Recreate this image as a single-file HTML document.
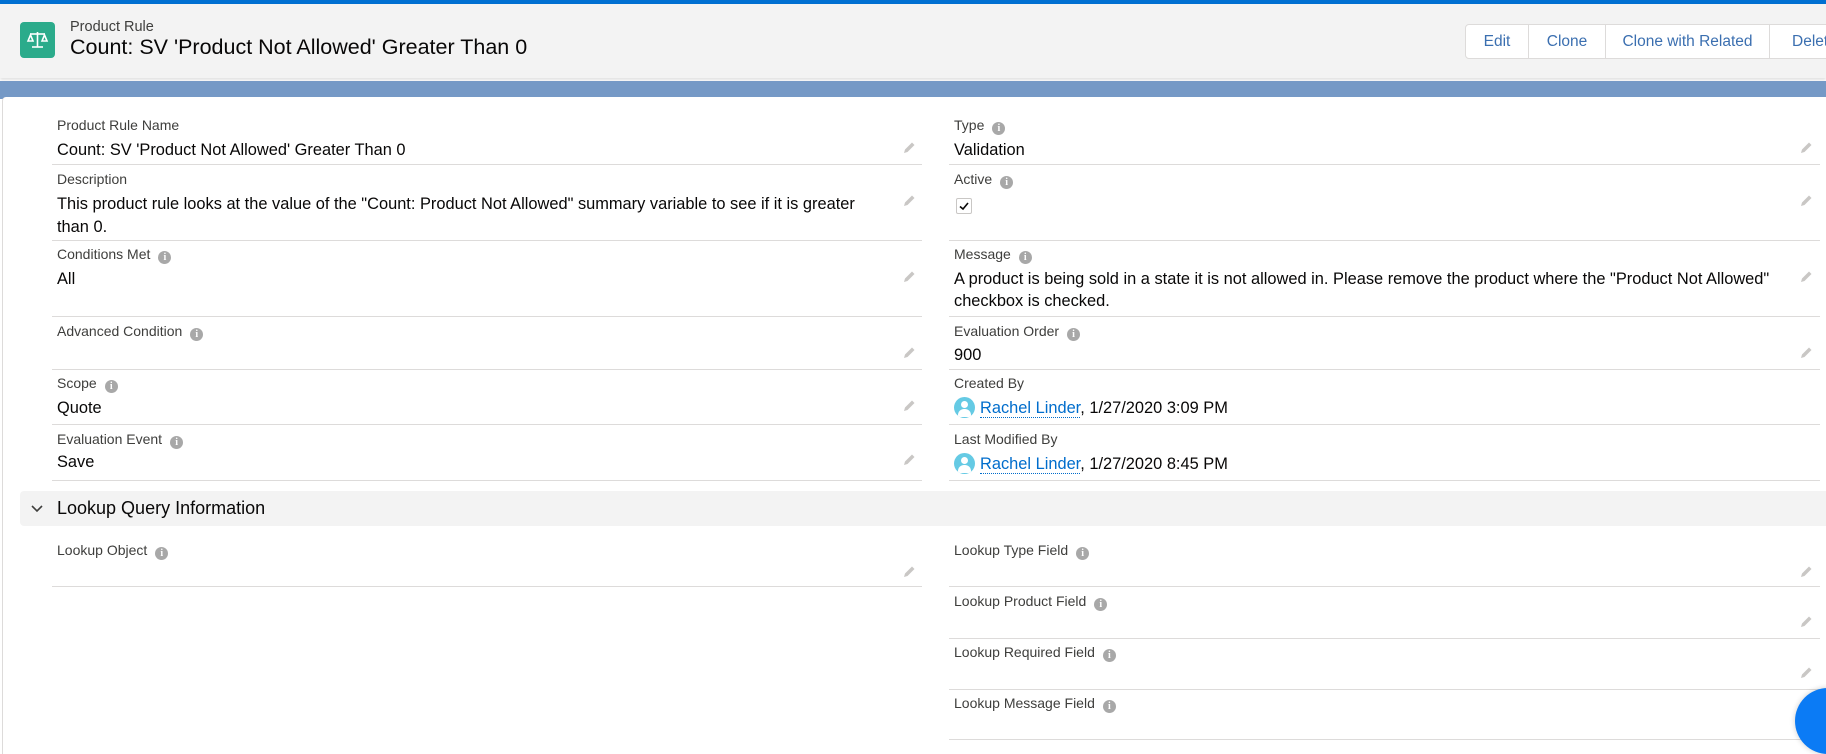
<!DOCTYPE html>
<html><head><meta charset="utf-8"><style>
*{margin:0;padding:0;box-sizing:border-box}
body{width:1826px;height:754px;overflow:hidden;background:#fff;font-family:"Liberation Sans",sans-serif;position:relative;color:#080707}
.a{position:absolute;white-space:nowrap}
.lbl{font-size:14px;line-height:18px;color:#3e3e3c}
.val{font-size:16.4px;line-height:23px;color:#080707}
.ln{position:absolute;height:1px;background:#dddbda}
.i{display:inline-block;width:13px;height:13px;border-radius:50%;background:#a8a8a8;color:#fff;font-size:10px;line-height:13px;text-align:center;font-weight:bold;margin-left:8px;vertical-align:-1px;font-family:"Liberation Serif",serif}
.pen{position:absolute;width:16px;height:16px}
.lnk{color:#006dcc;border-bottom:1px dotted #006dcc}
.av{display:inline-block;width:21px;height:21px;border-radius:50%;background:#65cae4;vertical-align:-5px;margin-right:5px;position:relative;overflow:hidden}
.av:before{content:"";position:absolute;left:7px;top:4px;width:7px;height:7px;border-radius:50%;background:#fff}
.av:after{content:"";position:absolute;left:4px;top:12px;width:13px;height:8px;border-radius:6px 6px 0 0;background:#fff}
.btn{position:absolute;top:24px;height:35px;border:1px solid #dddbda;background:#fff;font-size:15.5px;line-height:33px;text-align:center;color:#3b6fb0}
</style></head><body>
<div class="a" style="left:0;top:0;width:1826px;height:4px;background:#0070d2"></div>
<div class="a" style="left:0;top:4px;width:1826px;height:74px;background:#f3f3f3;box-shadow:0 2px 3px rgba(0,0,0,.12)"></div>
<div class="a" style="left:0;top:81px;width:1826px;height:18px;background:#7599c6"></div>
<div class="a" style="left:2px;top:97px;width:1824px;height:657px;background:#fff;border-radius:4px 0 0 0;border-left:1px solid #dddbda"></div>
<div class="a" style="left:20px;top:22px;width:35px;height:36px;background:#2bab8b;border-radius:4px"></div>
<svg class="a" style="left:20px;top:22px" width="35" height="36" viewBox="0 0 35 36"><g stroke="#fff" stroke-width="1.6" fill="none"><line x1="10" y1="12" x2="25" y2="12"/><line x1="17.5" y1="10" x2="17.5" y2="25"/><line x1="12" y1="25" x2="23" y2="25"/><path d="M8 19 L10.5 13 L13 19 Z"/><path d="M22 19 L24.5 13 L27 19 Z"/></g></svg>
<div class="a" style="left:70px;top:19px;font-size:14.5px;color:#3e3e3c">Product Rule</div>
<div class="a" style="left:70px;top:35px;font-size:21.5px;color:#080707">Count: SV 'Product Not Allowed' Greater Than 0</div>
<div class="btn" style="left:1465px;width:64px;border-radius:4px 0 0 4px">Edit</div>
<div class="btn" style="left:1528px;width:78px">Clone</div>
<div class="btn" style="left:1605px;width:165px">Clone with Related</div>
<div class="btn" style="left:1769px;width:80px;text-align:left;padding-left:22px">Delete</div>

<div class="a lbl" style="left:57px;top:116px">Product Rule Name</div>
<div class="a val" style="left:57px;top:139px">Count: SV 'Product Not Allowed' Greater Than 0</div>
<div class="ln" style="left:52px;top:164px;width:870px"></div>
<div class="a lbl" style="left:57px;top:170px">Description</div>
<div class="a val" style="left:57px;top:193px">This product rule looks at the value of the "Count: Product Not Allowed" summary variable to see if it is greater</div>
<div class="a val" style="left:57px;top:216px">than 0.</div>
<div class="ln" style="left:52px;top:240px;width:870px"></div>
<div class="a lbl" style="left:57px;top:245px">Conditions Met<span class="i">i</span></div>
<div class="a val" style="left:57px;top:268px">All</div>
<div class="ln" style="left:52px;top:316px;width:870px"></div>
<div class="a lbl" style="left:57px;top:322px">Advanced Condition<span class="i">i</span></div>
<div class="ln" style="left:52px;top:369px;width:870px"></div>
<div class="a lbl" style="left:57px;top:374px">Scope<span class="i">i</span></div>
<div class="a val" style="left:57px;top:397px">Quote</div>
<div class="ln" style="left:52px;top:424px;width:870px"></div>
<div class="a lbl" style="left:57px;top:430px">Evaluation Event<span class="i">i</span></div>
<div class="a val" style="left:57px;top:451px">Save</div>
<div class="ln" style="left:52px;top:480px;width:870px"></div>

<div class="a lbl" style="left:954px;top:116px">Type<span class="i">i</span></div>
<div class="a val" style="left:954px;top:139px">Validation</div>
<div class="ln" style="left:949px;top:164px;width:871px"></div>
<div class="a lbl" style="left:954px;top:170px">Active<span class="i">i</span></div>
<div class="a" style="left:956px;top:198px;width:16px;height:16px;border:1px solid #c9c7c5;border-radius:2px;background:#fff"></div>
<svg class="a" style="left:956px;top:198px" width="16" height="16"><path d="M4 8.5 L7 11 L12 5" stroke="#080707" stroke-width="1.6" fill="none"/></svg>
<div class="ln" style="left:949px;top:240px;width:871px"></div>
<div class="a lbl" style="left:954px;top:245px">Message<span class="i">i</span></div>
<div class="a val" style="left:954px;top:268px">A product is being sold in a state it is not allowed in. Please remove the product where the "Product Not Allowed"</div>
<div class="a val" style="left:954px;top:290px">checkbox is checked.</div>
<div class="ln" style="left:949px;top:316px;width:871px"></div>
<div class="a lbl" style="left:954px;top:322px">Evaluation Order<span class="i">i</span></div>
<div class="a val" style="left:954px;top:344px">900</div>
<div class="ln" style="left:949px;top:369px;width:871px"></div>
<div class="a lbl" style="left:954px;top:374px">Created By</div>
<div class="a val" style="left:954px;top:397px"><span class="av"></span><span class="lnk">Rachel Linder</span>, 1/27/2020 3:09 PM</div>
<div class="ln" style="left:949px;top:424px;width:871px"></div>
<div class="a lbl" style="left:954px;top:430px">Last Modified By</div>
<div class="a val" style="left:954px;top:453px"><span class="av"></span><span class="lnk">Rachel Linder</span>, 1/27/2020 8:45 PM</div>
<div class="ln" style="left:949px;top:480px;width:871px"></div>

<div class="a" style="left:20px;top:491px;width:1806px;height:35px;background:#f3f3f3;border-radius:4px 0 0 4px"></div>
<svg class="a" style="left:30px;top:502px" width="14" height="14"><path d="M2 4 L7 9 L12 4" stroke="#3e3e3c" stroke-width="1.6" fill="none"/></svg>
<div class="a" style="left:57px;top:497px;font-size:18px;line-height:22px;color:#080707">Lookup Query Information</div>

<div class="a lbl" style="left:57px;top:541px">Lookup Object<span class="i">i</span></div>
<div class="ln" style="left:52px;top:586px;width:870px"></div>
<div class="a lbl" style="left:954px;top:541px">Lookup Type Field<span class="i">i</span></div>
<div class="ln" style="left:949px;top:586px;width:871px"></div>
<div class="a lbl" style="left:954px;top:592px">Lookup Product Field<span class="i">i</span></div>
<div class="ln" style="left:949px;top:638px;width:871px"></div>
<div class="a lbl" style="left:954px;top:643px">Lookup Required Field<span class="i">i</span></div>
<div class="ln" style="left:949px;top:689px;width:871px"></div>
<div class="a lbl" style="left:954px;top:694px">Lookup Message Field<span class="i">i</span></div>
<div class="ln" style="left:949px;top:739px;width:871px"></div>

<svg width="0" height="0" style="position:absolute"><defs><symbol id="p" viewBox="0 0 16 16"><path d="M3 13 L4 9.5 L11 2.5 L13.5 5 L6.5 12 Z" fill="#c9c7c5"/></symbol></defs></svg>
<svg class="pen" style="left:901px;top:140px"><use href="#p"/></svg>
<svg class="pen" style="left:901px;top:193px"><use href="#p"/></svg>
<svg class="pen" style="left:901px;top:269px"><use href="#p"/></svg>
<svg class="pen" style="left:901px;top:345px"><use href="#p"/></svg>
<svg class="pen" style="left:901px;top:398px"><use href="#p"/></svg>
<svg class="pen" style="left:901px;top:452px"><use href="#p"/></svg>
<svg class="pen" style="left:901px;top:564px"><use href="#p"/></svg>
<svg class="pen" style="left:1798px;top:140px"><use href="#p"/></svg>
<svg class="pen" style="left:1798px;top:193px"><use href="#p"/></svg>
<svg class="pen" style="left:1798px;top:269px"><use href="#p"/></svg>
<svg class="pen" style="left:1798px;top:345px"><use href="#p"/></svg>
<svg class="pen" style="left:1798px;top:564px"><use href="#p"/></svg>
<svg class="pen" style="left:1798px;top:614px"><use href="#p"/></svg>
<svg class="pen" style="left:1798px;top:665px"><use href="#p"/></svg>

<div class="a" style="left:1795px;top:688px;width:66px;height:66px;border-radius:50%;background:#0b7bf5;box-shadow:0 0 6px rgba(0,0,0,.2)"></div>
</body></html>
